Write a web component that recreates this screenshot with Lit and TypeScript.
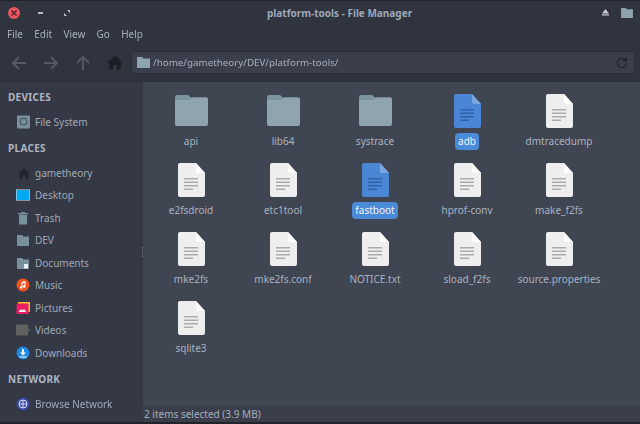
import { LitElement, html, css, svg } from "lit";
import { customElement } from "lit/decorators.js";

const folder = html`<svg class="fold" width="33" height="31" viewBox="0 0 33 31"><path d="M2 0h11l3 2.500h15a2 2 0 0 1 2 2v8H0V2a2 2 0 0 1 2-2z" fill="#7a939c"/><path d="M0 7a2 2 0 0 1 2-2h12l3.500-2.500H31a2 2 0 0 1 2 2V29a2 2 0 0 1-2 2H2a2 2 0 0 1-2-2z" fill="#90a4ae"/></svg>`;
const doc = (sel: boolean) => html`<svg class="big" width="27" height="34" viewBox="0 0 27 34"><path d="M2 0h16l9 10v22a2 2 0 0 1-2 2H2a2 2 0 0 1-2-2V2a2 2 0 0 1 2-2z" fill="${sel ? "#4a86d4" : "#eeeeee"}"/><path d="M18 0l9 10h-7a2 2 0 0 1-2-2z" fill="${sel ? "#7aa7e2" : "#ffffff"}"/><g fill="${sel ? "#2f62a8" : "#acacac"}"><rect x="6" y="15" width="14" height="1.500"/><rect x="6" y="18.500" width="14" height="1.500"/><rect x="6" y="22" width="14" height="1.500"/><rect x="6" y="25.500" width="9" height="1.500"/></g></svg>`;

const files: [string, number][] = [
  ["api", 0], ["lib64", 0], ["systrace", 0], ["adb", 2], ["dmtracedump", 1],
  ["e2fsdroid", 1], ["etc1tool", 1], ["fastboot", 2], ["hprof-conv", 1], ["make_f2fs", 1],
  ["mke2fs", 1], ["mke2fs.conf", 1], ["NOTICE.txt", 1], ["sload_f2fs", 1], ["source.properties", 1],
  ["sqlite3", 1],
];

const i = (c: unknown) => html`<svg width="16" height="16" viewBox="0 0 16 16">${c}</svg>`;
const places: [string, unknown][] = [
  ["gametheory", i(svg`<path d="M8 2.500L2 8.500h1.500V14h3.500v-3.500h2V14h3.500V8.500H14z" fill="#23262e"/>`)],
  ["Desktop", i(svg`<rect x="0" y="2.500" width="14" height="11" fill="#e8e8e8"/><rect x="0.500" y="3" width="13" height="10" fill="#03a9f4"/>`)],
  ["Trash", i(svg`<path d="M2 3h10v1.500H2zM5 2h4v1H5zM3 5h8v9.500H3z" fill="#78909c"/>`)],
  ["DEV", i(svg`<path d="M1 3h5l1.500 1.500H13v9.500H1z" fill="#78909c"/>`)],
  ["Documents", i(svg`<path d="M1 3h5l1.500 1.500H13v9.500H1z" fill="#78909c"/><rect x="8" y="9" width="4" height="4.500" fill="#eceff1"/>`)],
  ["Music", i(svg`<circle cx="7" cy="8" r="6.500" fill="#f4511e"/><path d="M5.500 5l4-1v5.500a1.300 1.300 0 1 1-1-1.200V6l-2 .5v4a1.300 1.300 0 1 1-1-1.200z" fill="#fff"/>`)],
  ["Pictures", i(svg`<rect x="2" y="2" width="12" height="10" fill="#fbc02d"/><rect x="0.500" y="3.500" width="12" height="10.500" fill="#e91e63"/><path d="M2.500 12l2.500-3 1.500 1.500 1.500-1.500 2.500 3z" fill="#fff"/>`)],
  ["Videos", i(svg`<rect x="0" y="2.500" width="12" height="11" rx="1" fill="#616161"/><path d="M12 7l2-1v4l-2-1z" fill="#555"/>`)],
  ["Downloads", i(svg`<circle cx="7" cy="8" r="6.500" fill="#1e88e5"/><path d="M6 4h2v3.500h2L7 10.500 4 7.500h2zM3.500 11.500h7v1h-7z" fill="#fff"/>`)],
];

@customElement("app-root")
export class AppRoot extends LitElement {
  static styles = css`
    :host { display: block; width: 640px; height: 424px; overflow: hidden;
      font-family: "Noto Sans", sans-serif; font-size: 10px; color: #aab2bf; background: #2f343f; }
    .win { width: 640px; height: 424px; display: flex; flex-direction: column; filter: blur(0.45px); }
    .title { height: 24px; display: flex; align-items: center; background: #2f343f; border-top: 1px solid #20232a; box-sizing: border-box; }
    .tl { flex: 0 0 267px; display: flex; align-items: center; padding-left: 8px; box-sizing: border-box; }
    .close { width: 12px; height: 12px; border-radius: 50%; background: #e9555f; display: grid; place-items: center; }
    .min { width: 5px; height: 2px; background: #b4bcc8; margin-left: 18px; }
    .max { width: 6px; height: 6px; margin-left: 21px; }
    .ttl { font-weight: 700; color: #9da7b8; }
    .tr { margin-left: auto; display: flex; align-items: center; gap: 12px; padding-right: 7px; }
    .menu { height: 20px; display: flex; align-items: center; gap: 11.250px; padding-left: 7px; color: #a6aebb; }
    .tool { height: 37px; display: flex; align-items: center; padding: 0 5px 0 10px; box-sizing: border-box; }
    .nav { display: flex; align-items: center; gap: 14px; margin-right: 8px; }
    .home { margin-left: 1px; }
    .path { flex: 1; height: 23px; background: #3b3f4b; border: 1px solid #2b2e38; border-radius: 3px; display: flex; align-items: center; padding: 0 6px 0 5px; gap: 3px; color: #a6aebb; box-sizing: border-box; font-size: 9.800px; }
    .path span { flex: 1; }
    .body { flex: 1; display: flex; min-height: 0; }
    .side { width: 143px; background: #353945; border-top: 1px solid #2b2e38; padding-top: 7px; box-sizing: border-box; color: #a0a8b5; }
    .h { font-weight: 700; color: #aeb5c1; padding-left: 8px; height: 16px; line-height: 16px; letter-spacing: 0.300px; margin-bottom: 6px; }
    .it { display: flex; align-items: center; height: 22.500px; padding-left: 16px; gap: 3px; }
    .sec { margin-bottom: 6px; }
    .net { margin-top: 7px; }
    .main { flex: 1; display: flex; flex-direction: column; min-width: 0; background: #404552; border-top: 1px solid #2b2e38; position: relative; }
    .grid { flex: 1; display: grid; grid-template-columns: repeat(5, 92px); grid-auto-rows: 69px; padding: 10px 0 0 2px; align-content: start; }
    .f { display: flex; flex-direction: column; align-items: center; }
    .ic { height: 36px; display: flex; align-items: flex-end; justify-content: center; margin-bottom: 5px; }
    .fold { margin-bottom: 2px; }
    .lb { padding: 1px 3px; color: #a9b1be; border-radius: 4px; line-height: 15px; white-space: nowrap; }
    .sel .lb { background: #4a8ad8; color: #eef3fb; }
    .status { height: 16px; background: #3a3e4a; display: flex; align-items: center; padding-left: 1px; color: #a6aebb; }
    .bottom { height: 2px; background: #20232a; }
    .grip { position: absolute; left: -1px; top: 165px; height: 10px; border-left: 1px dotted #6a6f7c; }
  `;
  render() {
    return html`<div class="win">
      <div class="title">
        <div class="tl">
          <div class="close"><svg width="8" height="8" viewBox="0 0 8 8"><path d="M1.500 1.500l5 5M6.500 1.500l-5 5" stroke="#5a2228" stroke-width="1.500"/></svg></div>
          <div class="min"></div>
          <svg class="max" viewBox="0 0 6 6"><path d="M3 0h3v3zM0 3l3 3H0z" fill="#b4bcc8"/></svg>
        </div>
        <div class="ttl">platform-tools - File Manager</div>
        <div class="tr">
          <svg width="7" height="7" viewBox="0 0 8 8"><path d="M4 0l4 5H0zM0 6h8v1.500H0z" fill="#c4cad4"/></svg>
          <svg width="12" height="10" viewBox="0 0 13 11"><path d="M0 0h5l1.500 1.500H13V11H0z" fill="#90a4ae"/></svg>
        </div>
      </div>
      <div class="menu"><span>File</span><span>Edit</span><span>View</span><span>Go</span><span>Help</span></div>
      <div class="tool">
        <div class="nav">
          <svg width="18" height="16" viewBox="0 0 18 16"><path d="M16 8H3M9 2L3 8l6 6" fill="none" stroke="#555964" stroke-width="2"/></svg>
          <svg width="18" height="16" viewBox="0 0 18 16"><path d="M2 8h13M9 2l6 6-6 6" fill="none" stroke="#555964" stroke-width="2"/></svg>
          <svg width="18" height="16" viewBox="0 0 18 16"><path d="M9 15V3M3 8l6-6 6 6" fill="none" stroke="#555964" stroke-width="2"/></svg>
          <svg class="home" width="16" height="15" viewBox="0 0 18 16"><path d="M9 0L0 8.500h2.500V16h4.500v-5h4v5h4.500V8.500H18z" fill="#1b1e25"/></svg>
        </div>
        <div class="path">
          <svg width="13" height="11" viewBox="0 0 13 11"><path d="M0 0h5l1.500 1.500H13V11H0z" fill="#90a4ae"/></svg>
          <span>/home/gametheory/DEV/platform-tools/</span>
          <svg width="12" height="12" viewBox="0 0 13 13"><path d="M10.500 3.500A5 5 0 1 0 11.500 6.500" fill="none" stroke="#23262e" stroke-width="1.500"/><path d="M12 0v5H7z" fill="#23262e"/></svg>
        </div>
      </div>
      <div class="body">
        <div class="side">
          <div class="h">DEVICES</div>
          <div class="it sec">${i(svg`<rect x="1" y="1.500" width="13" height="13" rx="1" fill="#78909c"/><circle cx="7.500" cy="7.500" r="3.500" fill="none" stroke="#37474f" stroke-width="1"/>`)}<span>File System</span></div>
          <div class="h">PLACES</div>
          ${places.map(([n, c]) => html`<div class="it">${c}<span>${n}</span></div>`)}
          <div class="h net">NETWORK</div>
          <div class="it">${i(svg`<circle cx="7" cy="8" r="6.500" fill="#3949ab"/><circle cx="7" cy="8" r="4" fill="none" stroke="#d7dbf0"/><path d="M3 8h8M7 4v8" stroke="#d7dbf0"/>`)}<span>Browse Network</span></div>
        </div>
        <div class="main">
          <div class="grip"></div>
          <div class="grid">
            ${files.map(([n, t]) => html`<div class="f ${t === 2 ? "sel" : ""}"><div class="ic">${t === 0 ? folder : doc(t === 2)}</div><div class="lb">${n}</div></div>`)}
          </div>
          <div class="status">2 items selected (3.9 MB)</div>
        </div>
      </div>
      <div class="bottom"></div>
    </div>`;
  }
}
